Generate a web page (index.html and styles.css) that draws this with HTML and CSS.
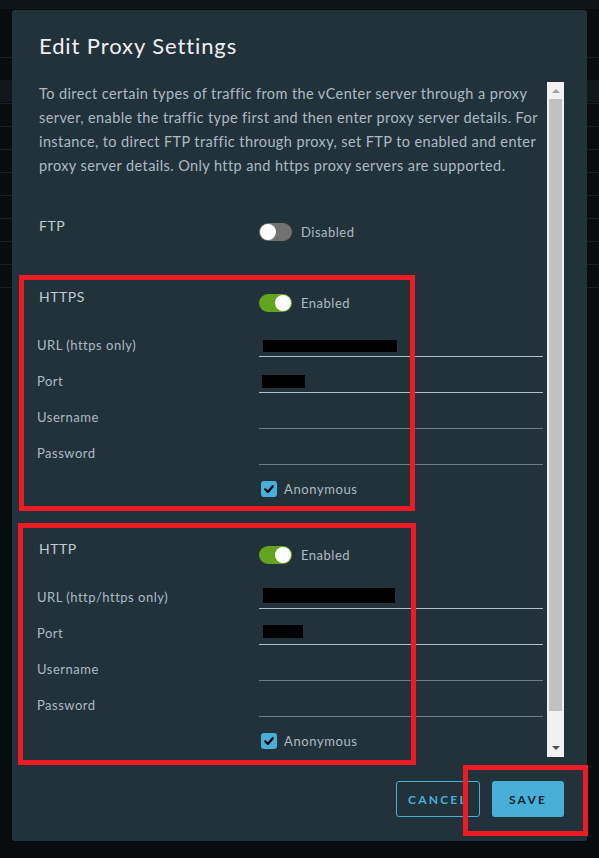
FILE: index.html
```html
<!DOCTYPE html>
<html>
<head>
<meta charset="utf-8">
<link rel="stylesheet" href="styles.css">
</head>
<body>
<div class="modal">
  <h1 class="title">Edit Proxy Settings</h1>
  <div class="body">
    <div class="scroll">
      <p class="desc">To direct certain types of traffic from the vCenter server through a proxy<br>server, enable the traffic type first and then enter proxy server details. For<br>instance, to direct FTP traffic through proxy, set FTP to enabled and enter<br>proxy server details. Only http and https proxy servers are supported.</p>

      <section class="sec">
        <div class="head">
          <span class="sec-label">FTP</span>
          <span class="toggle"><span class="track"><span class="knob"></span></span>Disabled</span>
        </div>
      </section>

      <section class="sec">
        <div class="head">
          <span class="sec-label">HTTPS</span>
          <span class="toggle on"><span class="track"><span class="knob"></span></span>Enabled</span>
        </div>
        <div class="row"><span class="lbl">URL (https only)</span><span class="input filled"><span class="redact r-url"></span></span></div>
        <div class="row"><span class="lbl">Port</span><span class="input filled"><span class="redact r-port"></span></span></div>
        <div class="row"><span class="lbl">Username</span><span class="input"></span></div>
        <div class="row"><span class="lbl">Password</span><span class="input"></span></div>
        <div class="row"><span class="lbl"></span><span class="check"><span class="box"><svg viewBox="0 0 16 16" width="16" height="16"><path d="M4.2 8.3 L6.9 11 L11.8 5.2" fill="none" stroke="#000" stroke-width="2.2" stroke-linecap="round" stroke-linejoin="round"/></svg></span>Anonymous</span></div>
      </section>

      <section class="sec">
        <div class="head">
          <span class="sec-label">HTTP</span>
          <span class="toggle on"><span class="track"><span class="knob"></span></span>Enabled</span>
        </div>
        <div class="row"><span class="lbl">URL (http/https only)</span><span class="input filled"><span class="redact r-url2"></span></span></div>
        <div class="row"><span class="lbl">Port</span><span class="input filled"><span class="redact r-port2"></span></span></div>
        <div class="row"><span class="lbl">Username</span><span class="input"></span></div>
        <div class="row"><span class="lbl">Password</span><span class="input"></span></div>
        <div class="row"><span class="lbl"></span><span class="check"><span class="box"><svg viewBox="0 0 16 16" width="16" height="16"><path d="M4.2 8.3 L6.9 11 L11.8 5.2" fill="none" stroke="#000" stroke-width="2.2" stroke-linecap="round" stroke-linejoin="round"/></svg></span>Anonymous</span></div>
      </section>
    </div>
    <div class="scrollbar">
      <span class="arrow up"></span>
      <span class="thumb"></span>
      <span class="arrow down"></span>
    </div>
  </div>
  <div class="footer">
    <button class="btn outline">CANCEL</button>
    <button class="btn primary">SAVE</button>
  </div>
</div>
<div class="mark mark-https"></div>
<div class="mark mark-http"></div>
<div class="mark mark-save"></div>
</body>
</html>
```
FILE: styles.css
```css
* { box-sizing: border-box; }
html, body { margin: 0; height: 100%; }
body {
  position: relative;
  padding: 10px 12px 0 12px;
  font-family: Lato, "Open Sans", sans-serif;
  background-color: #080c0f;
  background-image:
    linear-gradient(#0e1418, #0e1418),
    linear-gradient(#10171b, #10171b),
    repeating-linear-gradient(to bottom, transparent 0, transparent 22px, #182025 22px, #182025 23px);
  background-size: 100% 9px, 100% 22px, 100% 275px;
  background-position: 0 0, 0 80px, 0 35px;
  background-repeat: no-repeat;
  overflow: hidden;
}
.modal {
  width: 575px;
  height: 831px;
  background: #22323b;
  border-radius: 3px;
  padding: 0 23px 0 25px;
  display: flex;
  flex-direction: column;
}
.title {
  margin: 0 0 0 2px;
  padding-top: 22px;
  height: 72px;
  font-size: 22px;
  line-height: 28px;
  font-weight: 400;
  letter-spacing: 0.9px;
  color: #eef1f3;
}
.body {
  display: flex;
  height: 675px;
}
.scroll {
  flex: 1;
  overflow: hidden;
  padding-right: 4px;
}
.desc {
  margin: 0 0 38px 2px;
  font-size: 14.5px;
  line-height: 24px;
  letter-spacing: 0.4px;
  color: #adbac3;
  white-space: nowrap;
}
.sec + .sec { margin-top: 31px; }
.sec:last-child { margin-top: 32px; }
.head, .row {
  display: grid;
  grid-template-columns: 222px 1fr;
}
.head { height: 40px; }
.sec-label {
  margin-left: 2px;
  font-size: 14px;
  line-height: 20px;
  letter-spacing: 0.5px;
  color: #c0cbd2;
}
.toggle {
  display: flex;
  align-items: center;
  margin-top: 7px;
  height: 18px;
  font-size: 13px;
  letter-spacing: 0.5px;
  color: #adbac3;
}
.track {
  width: 33px;
  height: 18px;
  border-radius: 9px;
  background: #717171;
  position: relative;
  margin-right: 9px;
  flex: none;
}
.knob {
  position: absolute;
  top: 1px;
  left: 1px;
  width: 16px;
  height: 16px;
  border-radius: 50%;
  background: #fff;
}
.toggle.on .track { background: #62a420; }
.toggle.on .knob { left: 16px; }
.row {
  height: 36px;
  align-items: center;
}
.lbl {
  font-size: 13px;
  letter-spacing: 0.5px;
  color: #adbac3;
}
.input {
  align-self: start;
  margin-top: 6px;
  height: 24px;
  border-bottom: 1px solid #6c7c86;
  position: relative;
}
.input.filled { border-bottom-color: #b4bfc6; }
.redact { display: block; background: #000; margin-left: 4px; }
.r-url { width: 134px; height: 12px; margin-top: 7px; }
.r-port { width: 43px; height: 13px; margin-top: 6px; margin-left: 3px; }
.r-url2 { width: 132px; height: 15px; margin-top: 3px; }
.r-port2 { width: 40px; height: 13px; margin-top: 4px; }
.check {
  display: flex;
  align-items: center;
  margin-left: 2px;
  font-size: 13px;
  letter-spacing: 0.6px;
  color: #adbac3;
}
.box {
  width: 16px;
  height: 16px;
  border-radius: 3px;
  background: #49afd9;
  margin-right: 7px;
  display: flex;
}
.scrollbar {
  width: 17px;
  background: #f1f1f1;
  display: flex;
  flex-direction: column;
  align-items: center;
}
.arrow {
  width: 0; height: 0;
  border-left: 4px solid transparent;
  border-right: 4px solid transparent;
}
.arrow.up { border-bottom: 4px solid #a3a3a3; margin-top: 7px; margin-bottom: 6px; }
.arrow.down { border-top: 4px solid #505050; margin-top: auto; margin-bottom: 7px; }
.thumb {
  width: 13px;
  height: 612px;
  background: #c1c1c1;
}
.footer {
  display: flex;
  justify-content: flex-end;
  gap: 12px;
  padding-top: 24px;
}
.btn {
  height: 36px;
  border-radius: 3px;
  font-family: Lato, "Open Sans", sans-serif;
  font-size: 12px;
  font-weight: 700;
  letter-spacing: 2.2px;
  padding: 0;
}
.btn.outline {
  width: 84px;
  background: transparent;
  border: 1px solid #49afd9;
  color: #49afd9;
}
.btn.primary {
  width: 72px;
  background: #49afd9;
  border: none;
  color: #17242b;
}
.mark {
  position: absolute;
  border: 5px solid #ed1c24;
}
.mark-https { left: 19px; top: 275px; width: 396px; height: 236px; }
.mark-http { left: 18px; top: 523px; width: 398px; height: 242px; }
.mark-save { left: 463px; top: 765px; width: 125px; height: 71px; }
```
